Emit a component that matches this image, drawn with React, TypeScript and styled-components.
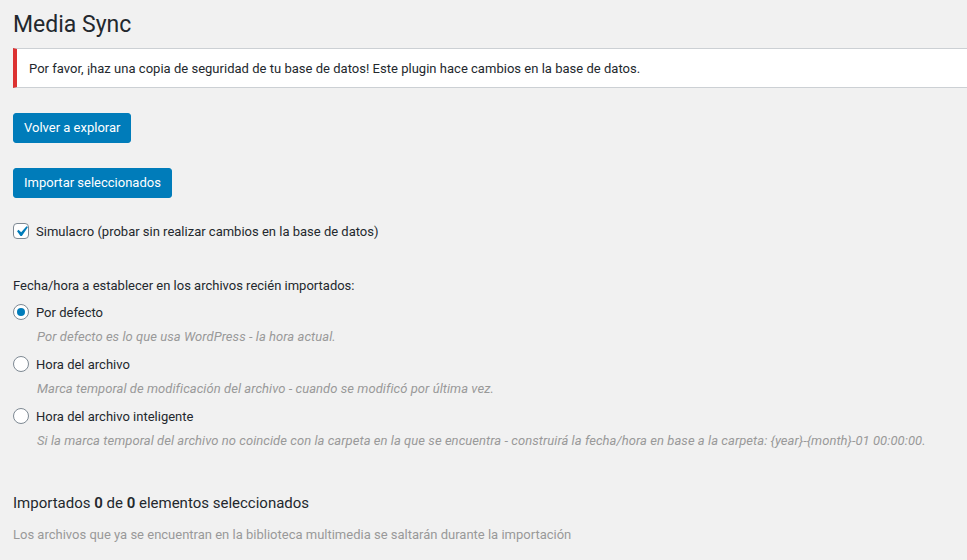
import React from "react";
import styled, { createGlobalStyle } from "styled-components";

const Global = createGlobalStyle`
  html, body { margin: 0; padding: 0; background: #f1f1f1; }
  body { font-family: Roboto, "Liberation Sans", sans-serif; color: #23282d; font-size: 13px; }
`;

const Page = styled.div`
  padding: 10px 0 0 13px;
  display: flex;
  flex-direction: column;
  align-items: flex-start;
`;

const Title = styled.h1`
  margin: 0;
  font-size: 23px;
  line-height: 30px;
  font-weight: 400;
  color: #23282d;
`;

const Notice = styled.div`
  align-self: stretch;
  margin-top: 8px;
  height: 40px;
  box-sizing: border-box;
  background: #fff;
  border-left: 4px solid #dc3232;
  border-top: 1px solid #ccd0d4;
  border-bottom: 1px solid #ccd0d4;
  padding: 0 12px;
  display: flex;
  align-items: center;
  font-size: 13px;
  letter-spacing: 0.02px;
`;

const Button = styled.button`
  margin-top: 25px;
  height: 30px;
  padding: 0 10px;
  background: #007cba;
  border: 1px solid #007cba;
  border-radius: 3px;
  color: #fff;
  font-family: inherit;
  font-size: 13px;
  line-height: 28px;
  cursor: pointer;
`;

const CheckRow = styled.label<{ $mt: number }>`
  margin-top: ${(p) => p.$mt}px;
  height: 20px;
  display: flex;
  align-items: center;
  gap: 7px;
  font-size: 13px;
`;

const Box = styled.span<{ $round?: boolean }>`
  width: 16px;
  height: 16px;
  box-sizing: border-box;
  border: 1px solid #7e8993;
  border-radius: ${(p) => (p.$round ? "50%" : "4px")};
  background: #fff;
  display: flex;
  align-items: center;
  justify-content: center;
  flex: none;
  overflow: visible;
`;

const Dot = styled.span`
  width: 8px;
  height: 8px;
  border-radius: 50%;
  background: #007cba;
`;

const CheckIcon = styled.svg`
  width: 21px;
  height: 21px;
  flex: none;
  margin: -3px;
`;

const Heading = styled.div`
  margin-top: 35px;
  line-height: 20px;
  font-size: 13px;
`;

const Description = styled.div`
  margin-top: 5px;
  margin-left: 24px;
  line-height: 20px;
  font-size: 13px;
  font-style: italic;
  color: #999;
  letter-spacing: 0.055px;
`;

const Summary = styled.div`
  margin-top: 40px;
  line-height: 24px;
  font-size: 15px;
  b { font-weight: 600; }
`;

const Note = styled.div`
  margin-top: 10px;
  line-height: 20px;
  font-size: 13px;
  color: #999;
`;

const Check = () => (
  <CheckIcon viewBox="0 0 20 20">
    <path d="M14.83 4.89l1.34.94-5.81 8.38H9.02L5.78 9.67l1.34-1.25 2.57 2.4z" fill="#007cba" />
  </CheckIcon>
);

const options = [
  { label: "Por defecto", desc: "Por defecto es lo que usa WordPress - la hora actual.", checked: true },
  { label: "Hora del archivo", desc: "Marca temporal de modificación del archivo - cuando se modificó por última vez.", checked: false },
  {
    label: "Hora del archivo inteligente",
    desc: "Si la marca temporal del archivo no coincide con la carpeta en la que se encuentra - construirá la fecha/hora en base a la carpeta: {year}-{month}-01 00:00:00.",
    checked: false,
  },
];

export default function App() {
  return (
    <>
      <Global />
      <Page>
        <Title>Media Sync</Title>
        <Notice>Por favor, ¡haz una copia de seguridad de tu base de datos! Este plugin hace cambios en la base de datos.</Notice>
        <Button>Volver a explorar</Button>
        <Button>Importar seleccionados</Button>
        <CheckRow $mt={23}>
          <Box>
            <Check />
          </Box>
          Simulacro (probar sin realizar cambios en la base de datos)
        </CheckRow>
        <Heading>Fecha/hora a establecer en los archivos recién importados:</Heading>
        {options.map((o, i) => (
          <React.Fragment key={o.label}>
            <CheckRow $mt={i === 0 ? 6 : 7}>
              <Box $round>{o.checked && <Dot />}</Box>
              {o.label}
            </CheckRow>
            <Description>{o.desc}</Description>
          </React.Fragment>
        ))}
        <Summary>
          Importados <b>0</b> de <b>0</b> elementos seleccionados
        </Summary>
        <Note>Los archivos que ya se encuentran en la biblioteca multimedia se saltarán durante la importación</Note>
      </Page>
    </>
  );
}
